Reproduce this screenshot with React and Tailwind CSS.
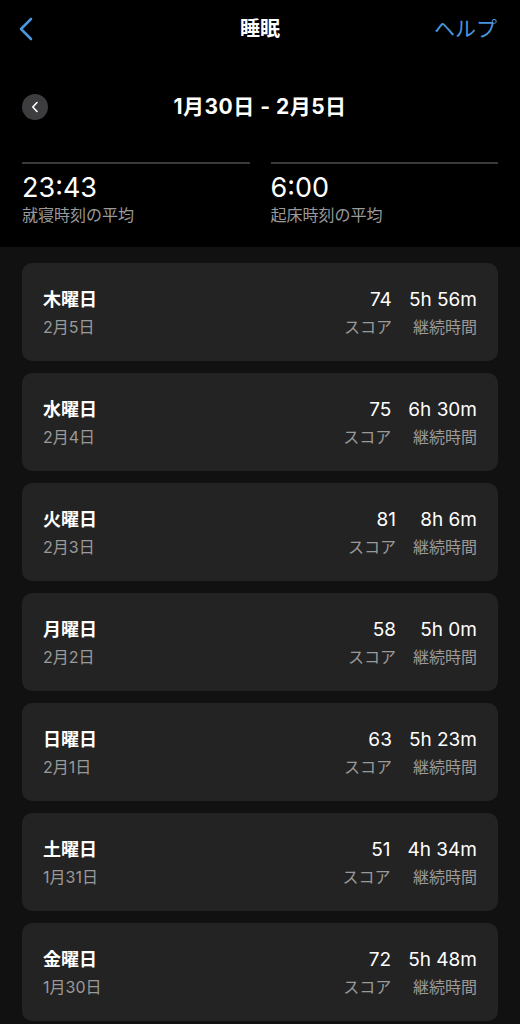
import React from 'react';

const days = [
  { day: '木曜日', date: '2月5日', score: '74', dur: '5h 56m' },
  { day: '水曜日', date: '2月4日', score: '75', dur: '6h 30m' },
  { day: '火曜日', date: '2月3日', score: '81', dur: '8h 6m' },
  { day: '月曜日', date: '2月2日', score: '58', dur: '5h 0m' },
  { day: '日曜日', date: '2月1日', score: '63', dur: '5h 23m' },
  { day: '土曜日', date: '1月31日', score: '51', dur: '4h 34m' },
  { day: '金曜日', date: '1月30日', score: '72', dur: '5h 48m' },
];

const font = { fontFamily: 'Inter, "Noto Sans CJK JP", sans-serif' };

function DayCard({ d }) {
  return (
    <div className="bg-[#232323] rounded-[10px] h-[98px] px-[21px] flex items-center justify-between">
      <div className="flex flex-col">
        <span className="text-[18px] leading-[24px] font-bold text-white">{d.day}</span>
        <span className="text-[16px] leading-[20px] mt-[5px] text-[#9a9a9a]">{d.date}</span>
      </div>
      <div className="flex gap-[17px]">
        <div className="flex flex-col items-end">
          <span className="text-[19px] leading-[24px] text-white">{d.score}</span>
          <span className="text-[16px] leading-[20px] mt-[5px] text-[#9a9a9a]">スコア</span>
        </div>
        <div className="flex flex-col items-end">
          <span className="text-[19px] leading-[24px] text-white">{d.dur}</span>
          <span className="text-[16px] leading-[20px] mt-[5px] text-[#9a9a9a]">継続時間</span>
        </div>
      </div>
    </div>
  );
}

export default function App() {
  return (
    <div className="w-[520px] h-[1024px] overflow-hidden bg-[#111111]" style={font}>
      {/* Header */}
      <div className="bg-black px-[22px] pb-[22px]">
        <div className="h-[58px] flex items-center justify-between relative">
          <svg width="16" height="24" viewBox="0 0 16 24" className="-ml-[4px]">
            <path d="M13 2 L3 12 L13 22" fill="none" stroke="#4a95dc" strokeWidth="2.6" strokeLinecap="round" strokeLinejoin="round" />
          </svg>
          <span className="absolute left-1/2 -translate-x-1/2 text-[20px] font-bold text-white">睡眠</span>
          <span className="text-[21px] text-[#4a95dc] mr-[1px]">ヘルプ</span>
        </div>
        <div className="h-[40px] mt-[29px] flex items-center relative">
          <div className="w-[26px] h-[26px] rounded-full bg-[#3d3d3f] flex items-center justify-center">
            <svg width="8" height="12" viewBox="0 0 8 12">
              <path d="M6 1.5 L1.8 6 L6 10.5" fill="none" stroke="#ffffff" strokeWidth="1.6" strokeLinecap="round" strokeLinejoin="round" />
            </svg>
          </div>
          <span className="absolute left-1/2 -translate-x-1/2 text-[21px] tracking-[0.5px] font-bold text-white whitespace-nowrap">1月30日 - 2月5日</span>
        </div>
        <div className="grid grid-cols-2 gap-[21px] mt-[35px]">
          <div className="border-t-2 border-[#3a3a3a] pt-[8px]">
            <div className="text-[27px] leading-[32px] text-white">23:43</div>
            <div className="text-[16px] leading-[20px] mt-[1px] text-[#9a9a9a]">就寝時刻の平均</div>
          </div>
          <div className="border-t-2 border-[#3a3a3a] pt-[8px]">
            <div className="text-[27px] leading-[32px] text-white">6:00</div>
            <div className="text-[16px] leading-[20px] mt-[1px] text-[#9a9a9a]">起床時刻の平均</div>
          </div>
        </div>
      </div>

      {/* Day list */}
      <div className="px-[22px] pt-[16px] flex flex-col gap-[12px]">
        {days.map((d) => (
          <DayCard key={d.day} d={d} />
        ))}
      </div>
    </div>
  );
}
